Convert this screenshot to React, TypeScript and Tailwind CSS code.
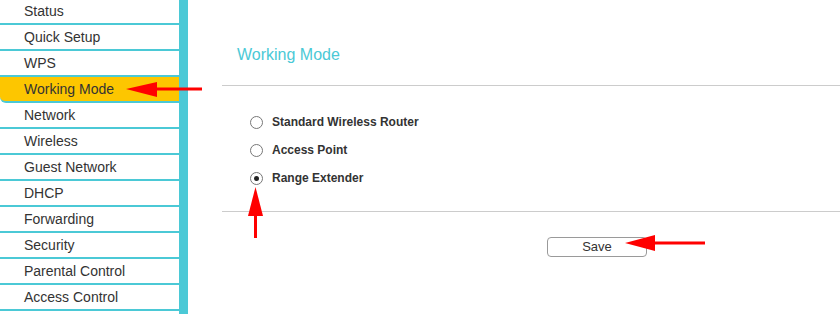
import React from 'react';

const menu = [
  'Status',
  'Quick Setup',
  'WPS',
  'Working Mode',
  'Network',
  'Wireless',
  'Guest Network',
  'DHCP',
  'Forwarding',
  'Security',
  'Parental Control',
  'Access Control',
];

const modes = [
  { label: 'Standard Wireless Router', checked: false },
  { label: 'Access Point', checked: false },
  { label: 'Range Extender', checked: true },
];

function Radio({ checked }: { checked: boolean }) {
  return (
    <span className="flex h-[13px] w-[13px] items-center justify-center rounded-full border border-[#777] bg-white">
      {checked && <span className="h-[5px] w-[5px] rounded-full bg-[#222]" />}
    </span>
  );
}

export default function App() {
  return (
    <div className="relative flex h-[314px] w-[840px] overflow-hidden bg-white font-['Liberation_Sans',Arial,sans-serif]">
      {/* sidebar menu */}
      <ul className="-mt-px w-[179px] shrink-0">
        {menu.map((item) => (
          <li
            key={item}
            className={
              item === 'Working Mode'
                ? 'h-[26px] rounded-bl-[6px] border-b-2 border-[#4bc9d6] bg-[#fdc600] pl-6 text-[14px] leading-[24px] text-[#333]'
                : 'h-[26px] border-b-2 border-[#4bc9d6] pl-6 text-[14px] leading-[24px] text-[#333]'
            }
          >
            {item}
          </li>
        ))}
      </ul>
      <div className="w-[9px] shrink-0 bg-[#4bc9d6]" />

      {/* content */}
      <main className="flex-1 pl-[34px]">
        <div className="h-[86px] border-b border-[#cccccc] pl-[15px] pt-[45px] text-[16px] leading-[20px] text-[#4bc9d6]">
          Working Mode
        </div>
        <div className="pt-[22px] pb-[19px] pl-[28px]">
          {modes.map((m) => (
            <div key={m.label} className="flex h-[28px] items-center gap-[9px]">
              <Radio checked={m.checked} />
              <span className="text-[12px] font-bold text-[#333]">{m.label}</span>
            </div>
          ))}
        </div>
        <div className="border-t border-[#cccccc] pt-[22px] pl-[325px]">
          <button className="h-[20px] w-[100px] rounded-[4px] border border-[#9a9a9a] bg-white text-[13px] leading-[18px] text-[#333]">
            Save
          </button>
        </div>
      </main>

      {/* annotation arrows */}
      <svg className="pointer-events-none absolute inset-0" width="840" height="314" viewBox="0 0 840 314">
        <g fill="#ff0000" stroke="none">
          <polygon points="126,89 157,82 157,97" />
          <rect x="155" y="87.5" width="47" height="3" />
          <polygon points="255.5,187 248,216 263,216" />
          <rect x="254" y="214" width="3" height="24" />
          <polygon points="625,243 655,235 655,251" />
          <rect x="653" y="241.5" width="52" height="3" />
        </g>
      </svg>
    </div>
  );
}
